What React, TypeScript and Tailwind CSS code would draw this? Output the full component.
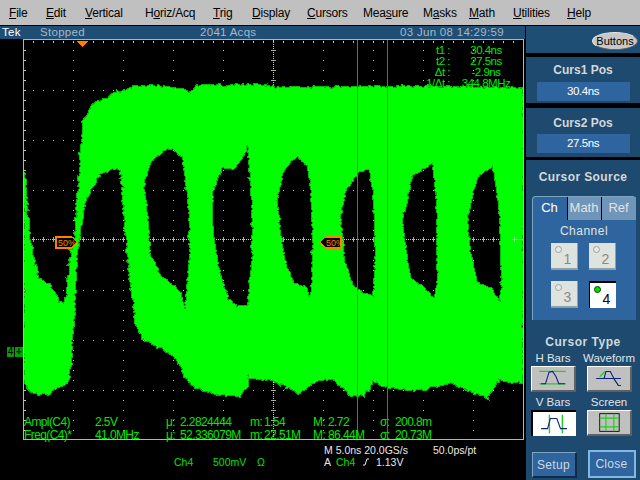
import type { ReactNode } from "react";

type Pt = [number, number];

// deterministic noise so the trace looks the same on every load
function makeRand(seed: number) {
  let s = seed;
  return () => {
    s = (s * 16807) % 2147483647;
    return s / 2147483647;
  };
}

function jagged(points: Pt[], amp: number, seed: number) {
  const rand = makeRand(seed);
  const out: string[] = [];
  points.forEach((p, i) => {
    const q = points[(i + 1) % points.length];
    const n = Math.max(1, Math.round(Math.hypot(q[0] - p[0], q[1] - p[1]) / 2));
    for (let k = 0; k < n; k++) {
      const t = k / n;
      const big = rand() > 0.92 ? 2 : 1;
      const jx = (rand() - 0.5) * amp * big;
      const jy = (rand() - 0.5) * amp * big;
      out.push(`${(p[0] + (q[0] - p[0]) * t + jx).toFixed(0)} ${(p[1] + (q[1] - p[1]) * t + jy).toFixed(0)}`);
    }
  });
  return "M" + out.join("L") + "Z";
}

const outer: Pt[] = [
  [24, 172], [25, 183], [28, 223], [33, 258], [35, 260], [38, 280], [48, 283], [57, 297], [59, 303], [65, 303], [67, 293],
  [70, 260], [75, 237], [78, 193], [81, 157], [84, 120], [90, 107], [98, 102], [118, 92], [133, 87], [153, 86], [177, 88],
  [190, 93], [197, 86], [253, 85], [280, 88], [400, 87], [523, 88], [523, 383], [497, 380], [487, 398], [470, 390],
  [450, 383], [420, 390], [387, 387], [373, 380], [365, 395], [350, 395], [333, 378], [313, 382], [298, 393], [283, 385],
  [270, 380], [253, 378], [248, 373], [247, 387], [238, 397], [220, 395], [190, 385], [183, 370], [172, 355], [163, 348],
  [145, 340], [137, 327], [132, 293], [128, 260], [123, 193], [121, 170], [113, 168], [100, 175], [92, 187], [85, 200],
  [77, 247], [73, 327], [70, 370], [67, 383], [57, 387], [48, 395], [30, 392], [24, 380],
];

const holes: Pt[][] = [
  [[145, 178], [152, 160], [167, 148], [172, 148], [183, 158], [185, 173], [188, 197], [190, 227], [190, 260], [187, 293], [185, 310], [180, 293], [173, 285], [160, 277], [153, 260], [150, 257], [147, 213], [144, 187]],
  [[212, 193], [217, 177], [223, 168], [233, 169], [242, 158], [248, 143], [249, 163], [252, 193], [253, 260], [250, 280], [248, 305], [237, 307], [228, 300], [218, 267], [212, 227]],
  [[277, 200], [283, 170], [292, 160], [298, 157], [308, 167], [312, 193], [313, 237], [312, 287], [309, 297], [305, 287], [293, 283], [285, 263], [280, 233]],
  [[340, 220], [345, 190], [350, 185], [358, 172], [370, 168], [373, 193], [376, 237], [374, 297], [363, 293], [352, 285], [345, 263]],
  [[402, 223], [412, 175], [422, 170], [433, 162], [437, 200], [438, 280], [435, 300], [423, 288], [410, 277], [405, 243]],
  [[467, 217], [477, 177], [493, 165], [500, 213], [502, 287], [500, 302], [490, 288], [477, 283], [470, 253]],
];

const tracePath = jagged(outer, 2.6, 4711) + holes.map((h, i) => jagged(h, 1.6, 97 + i * 13)).join("");

const menus: { before: string; key: string; after: string; width: string }[] = [
  { before: "", key: "F", after: "ile", width: "w-[37px]" },
  { before: "", key: "E", after: "dit", width: "w-[39px]" },
  { before: "", key: "V", after: "ertical", width: "w-[60px]" },
  { before: "H", key: "o", after: "riz/Acq", width: "w-[68px]" },
  { before: "", key: "T", after: "rig", width: "w-[39px]" },
  { before: "", key: "D", after: "isplay", width: "w-[55px]" },
  { before: "", key: "C", after: "ursors", width: "w-[56px]" },
  { before: "Mea", key: "s", after: "ure", width: "w-[60px]" },
  { before: "M", key: "a", after: "sks", width: "w-[46px]" },
  { before: "", key: "M", after: "ath", width: "w-[44px]" },
  { before: "", key: "U", after: "tilities", width: "w-[54px]" },
  { before: "", key: "H", after: "elp", width: "w-[40px]" },
];

function Graticule() {
  const xs = [73, 123, 173, 223, 323, 373, 423, 473];
  const ys = [90, 140, 190, 290, 340, 390];
  const tens = Array.from({ length: 50 }, (_, i) => 33 + i * 10);
  const tensY = Array.from({ length: 40 }, (_, i) => 50 + i * 10);
  return (
    <g fill="#c4c8b0">
      {xs.map((x) => tensY.map((y) => <rect key={`${x}-${y}`} x={x} y={y} width="1" height="1" />))}
      {ys.map((y) => tens.map((x) => <rect key={`${x}-${y}`} x={x} y={y} width="1" height="1" />))}
      {tens.map((x) => <rect key={x} x={x} y="41" width="1" height="2" />)}
      {tensY.map((y) => <rect key={y} x="24" y={y} width="2" height="1" />)}
      {tens.map((x) => <rect key={x} x={x} y="237" width="1" height="5" fill="#a0a890" />)}
      {tensY.map((y) => <rect key={y} x="271" y={y} width="5" height="1" fill="#a0a890" />)}
      <line x1="24" x2="523" y1="239.5" y2="239.5" stroke="#c4c8b0" strokeDasharray="1 1" />
      <line x1="273.5" x2="273.5" y1="40" y2="439" stroke="#c4c8b0" strokeDasharray="1 1" />
    </g>
  );
}

function Marker({ x, flip }: { x: number; flip?: boolean }) {
  return (
    <g transform={`translate(${x} 237)`}>
      <path
        d={flip ? "M0 5 L5 0 H21 V11 H5 Z" : "M0 0 H16 L21 5 L16 11 H0 Z"}
        fill="#000"
        stroke="#ff8000"
        strokeWidth="1.2"
      />
      <text x={flip ? 6 : 2} y="9" fontSize="9" fill="#ff8000" fontFamily="Liberation Sans, sans-serif">
        50%
      </text>
    </g>
  );
}

function Plot() {
  return (
    <svg viewBox="24 40 499 399" className="block w-[499px] h-[399px]" shapeRendering="crispEdges">
      <rect x="24" y="40" width="499" height="399" fill="#000" />
      <Graticule />
      <path d={tracePath} fill="none" stroke="#00bb00" strokeWidth="2" />
      <path d={tracePath} fill="#00ff00" fillRule="evenodd" />
      <line x1="24" x2="523" y1="239.5" y2="239.5" stroke="#c4c8b0" strokeDasharray="1 3" opacity="0.2" />
      <line x1="357.5" x2="357.5" y1="40" y2="439" stroke="#00b000" />
      <line x1="387.5" x2="387.5" y1="40" y2="439" stroke="#00b000" />
      <path d="M77 41 H88 L82.5 47 Z" fill="#ff8000" />
      <Marker x={56} />
      <Marker x={320} flip />
      <path d="M512 239.5 H523 M514 237 V242" stroke="#a8c8a8" fill="none" />
    </svg>
  );
}

const measures = [
  ["Ampl(C4)", "2.5V", "μ:", "2.2824444", "m:", "1.54", "M:", "2.72", "σ:", "200.8m"],
  ["Freq(C4)*", "41.0MHz", "μ:", "52.336079M", "m:", "22.51M", "M:", "86.44M", "σ:", "20.73M"],
];

const cursors = [
  ["t1 :", "30.4ns"],
  ["t2 :", "27.5ns"],
  ["Δt :", "-2.9ns"],
  ["1/Δt :", "344.8MHz"],
];

function ValuePanel({ title, value, className, boxGap }: { title: string; value: string; className: string; boxGap: string }) {
  return (
    <div className={`${className} ml-px bg-[#1e4a70] flex flex-col items-center`}>
      <div className="text-[12px] leading-[16px] font-bold text-[#d4d8d8]">{title}</div>
      <div className={`${boxGap} w-[93px] h-[19px] bg-[#2f659e] text-white text-[11.5px] tracking-[-0.4px] leading-[19px] text-center`}>
        {value}
      </div>
    </div>
  );
}

function ChannelButton({ n, on }: { n: number; on?: boolean }) {
  return (
    <div
      className={`relative w-[27px] h-[27px] text-[14px] ${
        on
          ? "bg-white text-black border-t-2 border-l border-black"
          : "bg-[#dfe3dd] text-[#8a8a8a] border-b-2 border-r border-[#8fa0a8]"
      }`}
    >
      <span
        className={`absolute left-[4px] top-[3px] w-[7px] h-[7px] rounded-full border ${
          on ? "bg-[#00e000] border-[#004000]" : "bg-[#e8e8e8] border-[#a0a0a0]"
        }`}
      />
      <span className="absolute left-[13px] top-[8px] leading-[16px]">{n}</span>
    </div>
  );
}

function TypeButton({ label, on, children }: { label: string; on?: boolean; children: ReactNode }) {
  return (
    <div className="w-[45px] flex flex-col items-center">
      <div className="text-[11.5px] leading-[14px] text-[#e0e4e4] whitespace-nowrap">{label}</div>
      <div
        className={`mt-[1px] w-[45px] h-[26px] ${
          on ? "bg-white border-t-2 border-l-2 border-black" : "bg-[#c0c0c0] border-t border-l border-white border-b-2 border-r-2 border-b-[#606060] border-r-[#606060]"
        }`}
      >
        <svg viewBox="0 0 45 26" className="block w-full h-full" fill="none">
          {children}
        </svg>
      </div>
    </div>
  );
}

export default function App() {
  return (
    <div className="w-[640px] h-[480px] overflow-hidden bg-black font-['Liberation_Sans',sans-serif]">
      {/* menu bar */}
      <div className="h-[26px] bg-[#c0c0c0] border-b border-black flex items-center pl-[9px] text-[12px] text-black">
        {menus.map((m) => (
          <div key={m.key + m.after} className={`${m.width} shrink-0 tracking-[-0.2px]`}>
            {m.before}
            <u>{m.key}</u>
            {m.after}
          </div>
        ))}
      </div>

      <div className="flex h-[454px]">
        {/* scope */}
        <div className="w-[525px] shrink-0">
          <div className="h-[13px] bg-[#1f4e75] flex items-center text-[11.5px] tracking-[0.3px] text-[#a4b8c8]">
            <span className="w-[40px] pl-[2px] text-white">Tek</span>
            <span className="w-[160px]">Stopped</span>
            <span className="w-[200px]">2041 Acqs</span>
            <span>03 Jun 08 14:29:59</span>
          </div>

          <div className="relative ml-[23px] w-[501px] h-[401px] border border-[#b4b8a0]">
            <Plot />

            {/* channel 4 ground marker */}
            <div className="absolute -left-[17px] top-[307px] w-[16px] h-[10px] bg-[#00a000] flex text-[10px] leading-[10px] text-black text-center">
              <span className="w-[8px] border-r border-black">4</span>
              <span className="w-[8px] font-bold">+</span>
            </div>

            {/* cursor readout */}
            <div className="absolute left-[400px] top-[5px] w-[92px] text-[#00e800] text-[11.5px] tracking-[-0.5px] leading-[11px]">
              {cursors.map(([k, v]) => (
                <div key={k} className="flex">
                  <span className="w-[26px] text-right mr-[6px] whitespace-nowrap">{k}</span>
                  <span className="w-[60px] text-center whitespace-nowrap">{v}</span>
                </div>
              ))}
            </div>

            {/* measurements */}
            <div className="absolute left-0 top-[376px] grid grid-cols-[71px_71px_14px_70px_14px_49px_15px_52px_15px_60px] text-[12px] leading-[13px] text-[#00e800] tracking-[-0.6px]">
              {measures.flat().map((t, i) => (
                <span key={i} className="whitespace-nowrap">
                  {t}
                </span>
              ))}
            </div>
          </div>

          {/* bottom readout */}
          <div className="flex text-[10.5px] leading-[12px]">
            <div className="w-[324px] pl-[174px] pt-[16px] flex text-[#00e000]">
              <span className="w-[39px]">Ch4</span>
              <span className="w-[44px]">500mV</span>
              <span>Ω</span>
            </div>
            <div className="pt-[4px] text-[#e8e8e8]">
              <div className="flex h-[12px]">
                <span className="w-[109px]">M 5.0ns 20.0GS/s</span>
                <span>50.0ps/pt</span>
              </div>
              <div className="flex h-[12px] items-center">
                <span className="w-[12px]">A</span>
                <span className="w-[26px] text-[#00e000]">Ch4</span>
                <svg viewBox="0 0 8 10" className="w-[8px] h-[10px] mr-[6px]" fill="none" stroke="#e8e8e8">
                  <path d="M1 8 H3 L5 2 H7" />
                </svg>
                <span>1.13V</span>
              </div>
            </div>
          </div>
        </div>

        {/* right panel */}
        <div className="w-[115px] shrink-0 flex flex-col text-[#e0e4e4]">
          <div className="h-[27px] ml-px bg-[#1f4e75] flex items-center justify-end pr-[2px] pt-[3px]">
            <div className="w-[46px] h-[18px] rounded-[50%] bg-[#c8c8c8] border border-[#e8e8e8] border-b-[#606060] border-r-[#606060] text-black text-[11px] leading-[16px] text-center">
              Buttons
            </div>
          </div>
          <div className="h-[4px]" />
          <ValuePanel title="Curs1 Pos" value="30.4ns" className="h-[46px] pt-[5px]" boxGap="mt-[4px]" />
          <div className="h-[5px]" />
          <ValuePanel title="Curs2 Pos" value="27.5ns" className="h-[49px] pt-[7px]" boxGap="mt-[3px]" />
          <div className="h-[3px]" />

          <div className="flex-1 ml-px bg-[#1e4a70] flex flex-col items-center">
            <div className="mt-[9px] text-[12px] leading-[16px] font-bold tracking-[0.4px] text-[#d4d8d8]">Cursor Source</div>
            <div className="mt-[11px] w-[104px] h-[124px] ml-[1px] bg-[#2f659e] border-l border-t border-[#7fa4c4] rounded-t-[4px] flex flex-col items-center">
              <div className="w-full h-[23px] flex text-[13px] leading-[22px] text-center">
                <div className="w-[34px] text-white">Ch</div>
                <div className="w-[34px] bg-[#6f95b8] border-l border-black">Math</div>
                <div className="flex-1 bg-[#6f95b8] border-l border-black">Ref</div>
              </div>
              <div className="mt-[4px] text-[12px] leading-[14px] tracking-[0.5px]">Channel</div>
              <div className="mt-[5px] mr-[2px] grid grid-cols-[27px_27px] gap-x-[11px] gap-y-[11px]">
                <ChannelButton n={1} />
                <ChannelButton n={2} />
                <ChannelButton n={3} />
                <ChannelButton n={4} on />
              </div>
            </div>

            <div className="mt-[14px] text-[12px] leading-[16px] font-bold tracking-[0.5px] text-[#d4d8d8]">Cursor Type</div>
            <div className="mt-[1px] mr-[4px] grid grid-cols-[45px_45px] gap-x-[11px] gap-y-[3px]">
              <TypeButton label="H Bars">
                <path d="M7 5 H37 M7 19 H37" stroke="#20d020" strokeWidth="1.5" />
                <path d="M9 19 H14 L18 6 L22 5 L26 11 L29 19 H36" stroke="#102080" strokeWidth="1.2" />
              </TypeButton>
              <TypeButton label="Waveform">
                <path d="M12 11 L18 5 M28 14 L33 20" stroke="#20d020" strokeWidth="1.5" />
                <path d="M8 13 H36 M17 13 L19 5 H24 L28 13 L33 21 H36" stroke="#102080" strokeWidth="1.2" />
              </TypeButton>
              <TypeButton label="V Bars" on>
                <path d="M17 3 V23 M31 3 V23" stroke="#20d020" strokeWidth="1.5" />
                <path d="M8 18 H15 L18 7 H25 L29 18 H36" stroke="#102080" strokeWidth="1.2" />
              </TypeButton>
              <TypeButton label="Screen">
                <rect x="12" y="3" width="22" height="20" stroke="#000" />
                <path d="M12 8 H34 M12 18 H34 M19 3 V23 M28 3 V23" stroke="#20d020" strokeWidth="1.3" />
              </TypeButton>
            </div>

            <div className="mt-[14px] w-[104px] ml-[1px] flex items-end justify-between text-[12px] text-center tracking-[0.3px] text-[#d0d8e0]">
              <div className="w-[45px] h-[26px] bg-[#2f659e] border-t border-l border-[#7fa4c4] border-b-2 border-r-2 border-b-[#0c2c48] border-r-[#0c2c48] leading-[24px]">
                Setup
              </div>
              <div className="w-[48px] h-[28px] bg-[#2f659e] border-2 border-[#7fb8e0] leading-[24px]">Close</div>
            </div>
          </div>
        </div>
      </div>
    </div>
  );
}
